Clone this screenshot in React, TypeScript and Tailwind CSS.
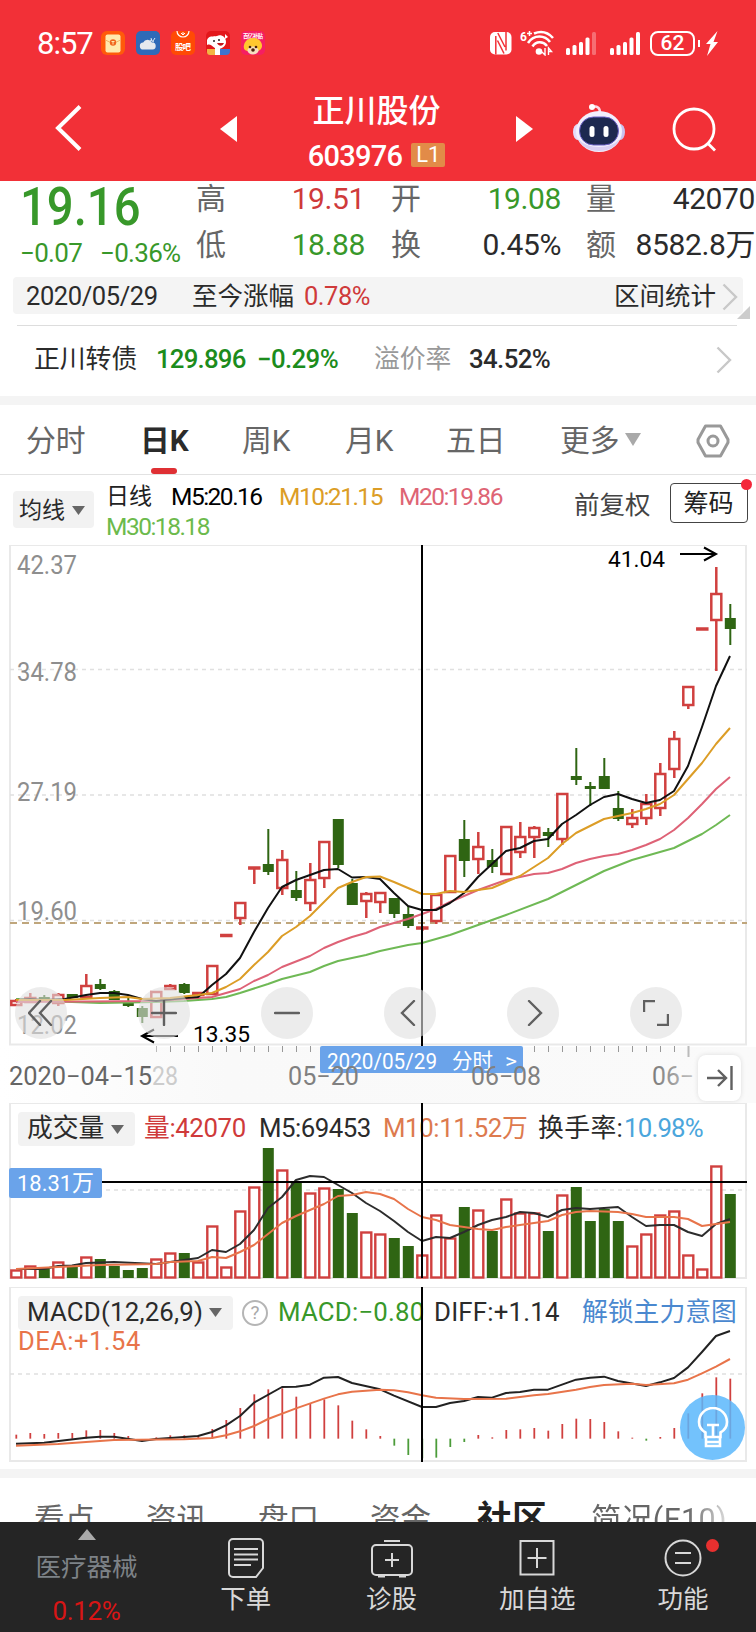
import type { ReactNode } from "react";
import { clsx } from "clsx";

const RED = "#d0403f";
const GREEN = "#2f6513";
const STEP = 14;
const FIRST_X = 16.3;

type Candle = [kind: "r" | "g", top: number, bottom: number, high: number, low: number];
type Point = [number, number];

const candles: Candle[] = [
  ["r", 1001, 1005, 999, 1005], ["r", 998, 1002, 993, 1003], ["g", 997, 1001, 995, 1002], ["r", 995, 1003, 993, 1006],
  ["g", 994, 998, 994, 998], ["r", 986, 997, 974, 999], ["g", 984, 989, 979, 990], ["g", 991, 1000, 990, 1000],
  ["g", 1001, 1006, 998, 1007], ["g", 1008, 1017, 1006, 1023], ["r", 992, 1017, 992, 1017], ["r", 986, 989, 984, 990],
  ["g", 984, 993, 983, 994], ["r", 993, 995, 993, 995], ["r", 966, 994, 966, 994], ["r", 935, 936, 935, 936],
  ["r", 903, 918, 903, 925], ["r", 867.5, 868.5, 868, 884], ["g", 864, 872, 829, 875], ["r", 860, 888, 850, 895],
  ["g", 890, 898, 871, 901], ["r", 880, 903, 863, 911], ["r", 842, 878, 842, 888], ["g", 819, 865, 819, 868],
  ["g", 883, 905, 879, 905], ["r", 894, 901, 892, 918], ["r", 893, 902, 893, 913], ["g", 898, 914, 898, 918],
  ["g", 914, 926, 906, 928], ["r", 927.5, 928.5, 926, 931], ["r", 895, 921, 895, 924], ["r", 856, 892, 856, 892],
  ["g", 839, 861, 820, 877], ["r", 847, 859, 832, 874], ["g", 860, 867, 849, 873], ["r", 827, 874, 827, 874],
  ["r", 837, 852, 822, 858], ["r", 828, 837, 826, 858], ["g", 832, 836, 828, 847], ["r", 794, 839, 794, 845],
  ["g", 776, 780, 748, 785], ["g", 786, 789, 782, 806], ["g", 776, 789, 758, 789], ["g", 808, 819, 791, 821],
  ["r", 818, 824, 809, 828], ["r", 804, 818, 794, 825], ["r", 774, 808, 763, 816], ["r", 739, 769, 731, 778],
  ["r", 687, 705, 687, 709], ["r", 628.5, 629.5, 629, 629], ["r", 594, 620, 567, 671], ["g", 618, 629, 604, 645],
];

const ma5: Point[] = [
  [16, 1000], [30, 999], [44, 1000], [65, 999], [86, 995], [100, 993], [114, 993], [128, 995], [142, 999], [156, 1001],
  [184, 998], [198, 997], [203, 993], [212, 985], [226, 974], [240, 958], [254, 932], [268, 908], [282, 887], [296, 880],
  [310, 875], [324, 870], [338, 869], [352, 877.5], [366, 877], [380, 879], [394, 893], [408, 906], [422, 910], [436, 910],
  [450, 903], [464, 893], [478, 877], [492, 864], [506, 851], [520, 848], [534, 841], [548, 839], [562, 824], [576, 815],
  [590, 805], [604, 797], [618, 794], [632, 799], [646, 803], [660, 800], [674, 791], [688, 766], [702, 727], [716, 686],
  [730, 656],
];
const ma10: Point[] = [
  [16, 1000], [65, 1000], [100, 998], [128, 997], [142, 999], [170, 998], [198, 995], [212, 993], [226, 987], [240, 979],
  [254, 965], [268, 952], [282, 936], [296, 927], [310, 916], [324, 902], [338, 888], [352, 882], [366, 877], [380, 876.5],
  [394, 882], [408, 888], [422, 894], [436, 894], [450, 891], [464, 892], [478, 890], [492, 888], [506, 882], [520, 876],
  [534, 867], [548, 858], [562, 844], [576, 833], [590, 826], [604, 819], [618, 816], [632, 813], [646, 809], [660, 804],
  [674, 795], [688, 779], [702, 763], [716, 744], [730, 728],
];
const ma20: Point[] = [
  [16, 1002], [156, 1001], [198, 998], [212, 997], [240, 989], [254, 981], [268, 975], [282, 967], [310, 956], [324, 948],
  [338, 942], [352, 937], [366, 933], [380, 927], [394, 923], [408, 919], [422, 914], [436, 909], [450, 902], [464, 896],
  [478, 890], [506, 880], [520, 877], [534, 874], [548, 873], [562, 869], [576, 863], [590, 859], [604, 856], [618, 854],
  [632, 850], [646, 845], [660, 839], [674, 830], [688, 818], [702, 804], [716, 789], [730, 777],
];
const ma30: Point[] = [
  [16, 999], [44, 1001], [100, 1003], [156, 1002], [184, 1001], [212, 999], [226, 997], [240, 993], [268, 984], [282, 979],
  [310, 972], [324, 966], [338, 961], [366, 955], [380, 951], [408, 945], [422, 943], [436, 939], [450, 935], [478, 925],
  [506, 915], [548, 899], [576, 885], [604, 871], [632, 860], [660, 852], [674, 848], [702, 834], [716, 825], [730, 815],
];

// top edge of every volume bar, base line is 1278
const volumes = [
  1270, 1266, 1269, 1262, 1267, 1257, 1259, 1266, 1270, 1268, 1259, 1253, 1253, 1262, 1226, 1267, 1211, 1187, 1148, 1170,
  1183, 1193, 1188, 1189, 1213, 1232, 1234, 1238, 1246, 1255, 1215, 1238, 1207, 1210, 1231, 1199, 1213, 1213, 1231, 1195,
  1187, 1221, 1209, 1221, 1246, 1234, 1215, 1211, 1255, 1269, 1166, 1194,
];
const vol5: Point[] = [
  [16, 1269], [44, 1269], [58, 1266], [72, 1265.5], [86, 1263], [114, 1262], [156, 1264], [184, 1260], [198, 1258],
  [212, 1250], [226, 1252], [240, 1244], [254, 1230], [268, 1208], [282, 1197], [296, 1180], [310, 1176], [324, 1177],
  [338, 1185], [352, 1193], [366, 1203], [380, 1211], [394, 1221], [408, 1232], [422, 1241], [436, 1237], [450, 1238],
  [464, 1232], [478, 1225], [492, 1220], [506, 1217], [520, 1212], [534, 1213], [548, 1217], [562, 1210], [576, 1208],
  [590, 1209], [618, 1207], [632, 1217], [646, 1226], [660, 1225], [674, 1225], [688, 1232], [702, 1236], [716, 1224],
  [730, 1219],
];
const vol10: Point[] = [
  [16, 1269], [58, 1267], [100, 1265], [156, 1264], [170, 1262], [198, 1261], [212, 1257], [226, 1258], [240, 1252],
  [254, 1245], [268, 1234], [282, 1223], [296, 1216], [324, 1204], [338, 1196], [352, 1195], [366, 1192], [380, 1194],
  [394, 1199], [408, 1209], [422, 1217], [436, 1220], [450, 1225], [478, 1229], [492, 1230], [506, 1227], [520, 1225],
  [548, 1221], [562, 1215], [576, 1212], [590, 1211], [618, 1212], [632, 1214], [646, 1217], [674, 1217], [688, 1219],
  [702, 1226], [716, 1224], [730, 1222],
];

// MACD values are in thirds of a pixel, zero axis at 476
const MACD_ZERO = 476;
const macdBars = [
  464, 459, 462, 459, 459, 451, 450, 459, 468, 476, 472, 466, 466, 466, 447, 420, 384, 343, 328, 325, 350, 370, 358, 376,
  422, 448, 468, 497, 525, 535, 533, 501, 486, 465, 472, 450, 448, 444, 452, 432, 416, 417, 426, 454, 473, 482, 471, 444,
  400, 340, 292, 296,
];
const diff: Point[] = [
  [16, 491], [44, 488], [86, 473], [100, 470], [114, 470], [142, 483], [156, 477], [198, 468], [212, 456], [226, 436],
  [240, 408], [254, 368], [282, 321], [296, 320], [310, 314], [324, 293], [338, 291], [352, 309], [380, 328], [394, 347],
  [422, 381], [436, 381], [450, 369], [464, 363], [478, 351], [492, 353], [506, 339], [520, 336], [534, 329], [548, 329],
  [576, 299], [590, 293], [604, 290], [618, 303], [646, 318], [660, 307], [674, 294], [688, 262], [702, 216], [716, 168],
  [730, 153],
];
const dea: Point[] = [
  [16, 497], [58, 492], [114, 480], [184, 478], [212, 474], [226, 466], [240, 454], [254, 438], [268, 417], [296, 385],
  [324, 356], [338, 343], [352, 335], [380, 329], [394, 331], [408, 337], [422, 346], [436, 353], [464, 357], [506, 356],
  [520, 351], [534, 346], [548, 342], [576, 329], [590, 321], [604, 315], [632, 311], [646, 315], [674, 310], [688, 299],
  [702, 280], [716, 260], [730, 237],
];

const macdY = (v: number) => 1280 + v / 3;
const xAt = (i: number) => FIRST_X + STEP * i;
const toMacd = (pts: Point[]) => pts.map(([x, y]): Point => [x, macdY(y)]);

function Line({ pts, color }: { pts: Point[]; color: string }) {
  return (
    <polyline
      points={pts.map((p) => p.join(",")).join(" ")}
      fill="none"
      stroke={color}
      strokeWidth="2"
      strokeLinejoin="round"
    />
  );
}

function Label({ x, y, w, size = 25, color = "#8e8e8e", children }: {
  x: number; y: number; w: number; size?: number; color?: string; children: string;
}) {
  return (
    <text x={x} y={y} fontSize={size} fill={color} textLength={w} lengthAdjust="spacingAndGlyphs">
      {children}
    </text>
  );
}

function Dash({ y, color = "#e0e0e0" }: { y: number; color?: string }) {
  return <line x1="10" x2="747" y1={y} y2={y} stroke={color} strokeWidth="1.3" strokeDasharray="4 4" />;
}

function Chevron({ className }: { className?: string }) {
  return (
    <svg className={clsx("w-[16px] h-[28px]", className)} viewBox="0 0 16 28" fill="none" stroke="#c8c8c8" strokeWidth="2.4">
      <path d="M1.5 1.5 14 14 1.5 26.5" />
    </svg>
  );
}

function Caret({ className }: { className?: string }) {
  return (
    <svg className={className} viewBox="0 0 14 10" preserveAspectRatio="none" fill="currentColor">
      <path d="M0 0H14L7 10Z" />
    </svg>
  );
}

function StatusBar() {
  return (
    <div className="flex h-[86px] items-center pl-[37px] text-white">
      <span className="w-[64px] text-[31px] leading-none tracking-[-1px]">8:57</span>
      <div className="flex gap-[11px]">
        <svg width="24" height="24" viewBox="0 0 24 24">
          <rect width="24" height="24" rx="6" fill="#ff5a0a" />
          <rect x="4.5" y="3.5" width="15" height="18" rx="2" fill="#ffe9ad" />
          <path d="M4.5 9Q12 14 19.5 9" fill="none" stroke="#f3b46a" />
          <circle cx="12" cy="11.5" r="3.2" fill="#f0651e" />
          <path d="M10.5 10.5h3M12 10.5v3" stroke="#ffe9ad" />
        </svg>
        <svg width="24" height="24" viewBox="0 0 24 24">
          <rect width="24" height="24" rx="5" fill="#2f6ab8" />
          <path d="M14 9l4 2M19 7l-2 3M15 7l1 3" stroke="#dfeaf6" />
          <path d="M7.5 18.5a3.5 3.5 0 0 1-.3-7 4.8 4.8 0 0 1 8.7 0 3.5 3.5 0 0 1 .6 7Z" fill="#e6e9ee" />
        </svg>
        <svg width="24" height="24" viewBox="0 0 24 24">
          <rect width="24" height="24" rx="5" fill="#ff4a05" />
          <path d="M6 0a6 6 0 0 0 12 0" fill="none" stroke="#fff" strokeWidth="1.2" />
          <path d="M10 2l2 2 2-2M12 4V1" stroke="#fff" fill="none" />
          <text x="4" y="19" fontSize="8.5" fontWeight="700" fill="#fff" textLength="16">股吧</text>
        </svg>
        <svg width="24" height="24" viewBox="0 0 24 24">
          <rect width="24" height="24" rx="5" fill="#e3171b" />
          <path d="M1 9C3 4 7 6 11 5c4-2 9 1 9 6 0 4-4 7-8 7-5 0-6-6-11-4Z" fill="#fff" />
          <path d="M19 3l3 3-3 2Z" fill="#fff" />
          <path d="M11 12h7c-1 3-5 4-7 0Z" fill="#c4151c" />
          <circle cx="13" cy="9" r="1" fill="#222" />
          <circle cx="8" cy="10" r="1" fill="#222" />
          <path d="M1 18h8v6H4a3 3 0 0 1-3-3Z" fill="#f3b443" />
          <rect x="9" y="17" width="5" height="7" fill="#fff" />
          <path d="M14 18h10v2a4 4 0 0 1-4 4h-6Z" fill="#3f74cf" />
        </svg>
        <svg width="24" height="24" viewBox="0 0 24 24">
          <rect width="24" height="24" rx="5" fill="#f51e62" />
          <text x="2" y="6.5" fontSize="5.5" fontWeight="700" fill="#fff" textLength="20">百亿补贴</text>
          <path d="M12 7c6 0 9 4 9 8 0 3-3 5-5 5H7c-3 0-5-2-4-6 1-4 4-7 9-7Z" fill="#ffc72e" />
          <ellipse cx="12" cy="19.5" rx="5.5" ry="4" fill="#f6dfc0" />
          <circle cx="9" cy="16" r="1.3" fill="#4a220c" />
          <circle cx="15" cy="16" r="1.3" fill="#4a220c" />
          <circle cx="12" cy="19" r="1.8" fill="#4a220c" />
        </svg>
      </div>

      <svg className="ml-[225px]" width="22" height="23" viewBox="0 0 22 23">
        <rect width="21.5" height="22.5" rx="5" fill="#fff" />
        <path d="M5.8 4v18.500M7.800 1 15 15M7.500 8.500l6.500 13M16 0v18.500" fill="none" stroke="#f23037" strokeWidth="1.5" />
      </svg>
      <svg className="ml-[8px]" width="34" height="26" viewBox="0 0 34 26" fill="none" stroke="#fff">
        <text x="0" y="11" fontSize="12" fontWeight="700" fill="#fff" stroke="none">6</text>
        <path d="M7 3.5h5M9.5 1v5" strokeWidth="1.5" />
        <path d="M14 3.5Q25-1 33 8" strokeWidth="2.6" />
        <path d="M8 13C14 4 25 5 30 12M12.5 16.5C16 11 23 11 27 16" strokeWidth="2.6" />
        <circle cx="19" cy="21.5" r="3.3" fill="#fff" stroke="none" />
        <path d="M25 18v7l-3-3M28.5 25v-7l3 3.5h-3" strokeWidth="1.4" />
      </svg>
      <svg className="ml-[12px]" width="30" height="23" viewBox="0 0 30 23" fill="#fff">
        <rect x="0" y="16" width="4" height="7" rx="1.5" />
        <rect x="6.5" y="13" width="4" height="10" rx="1.5" />
        <rect x="13" y="10" width="4" height="13" rx="1.5" />
        <rect x="19.5" y="5.5" width="4" height="17.5" rx="1.5" />
        <rect x="26" y="0" width="4" height="23" rx="1.5" opacity=".3" />
      </svg>
      <svg className="ml-[14px]" width="30" height="23" viewBox="0 0 30 23" fill="#fff">
        <rect x="0" y="16" width="4" height="7" rx="1.5" />
        <rect x="6.5" y="13" width="4" height="10" rx="1.5" />
        <rect x="13" y="10" width="4" height="13" rx="1.5" />
        <rect x="19.5" y="5.5" width="4" height="17.5" rx="1.5" />
        <rect x="26" y="0" width="4" height="23" rx="1.5" />
      </svg>
      <span className="ml-[10px] flex h-[25px] w-[45px] items-center justify-center rounded-[8px] border-2 border-white text-[21px] leading-none font-medium">
        62
      </span>
      <span className="ml-[3px] h-[7px] w-[2px] bg-white" />
      <svg className="ml-[6px]" width="12" height="25" viewBox="0 0 12 25" fill="#fff">
        <path d="M11.5 0 0 13h4.5L1 25 12 11H7.5Z" />
      </svg>
    </div>
  );
}

function TitleBar() {
  return (
    <div className="flex h-[95px] items-center text-white">
      <svg className="ml-[55px] mt-[-12px]" width="27" height="46" viewBox="0 0 27 46" fill="none" stroke="#fff" strokeWidth="4">
        <path d="M25 1.5 3 23 25 44.5" />
      </svg>
      <svg className="ml-[138px] mt-[-10px]" width="17" height="26" viewBox="0 0 17 26" fill="#fff">
        <path d="M17 0v26L0 13Z" />
      </svg>
      <div className="flex w-[279px] flex-col items-center">
        <span className="text-[32px] leading-[36px] font-medium">正川股份</span>
        <div className="mt-[6px] flex h-[40px] items-center gap-[9px]">
          <span className="mt-[3px] text-[29px] leading-none font-medium tracking-[-0.7px]">603976</span>
          <span className="flex h-[24px] w-[34px] items-center justify-center rounded-[2px] bg-[#e28b48] text-[22px] leading-none">L1</span>
        </div>
      </div>
      <svg className="mt-[-10px]" width="17" height="26" viewBox="0 0 17 26" fill="#fff">
        <path d="M0 0v26l17-13Z" />
      </svg>
      <svg className="ml-[40px] mt-[-12px]" width="52" height="50" viewBox="0 0 52 50">
        <path d="M19 4q8-2 8 6" fill="none" stroke="#fbd9e6" strokeWidth="2.5" />
        <circle cx="19" cy="4" r="3" fill="#fff" />
        <ellipse cx="5" cy="29" rx="5" ry="8" fill="#e4dcfa" />
        <ellipse cx="47" cy="29" rx="5" ry="8" fill="#c9c0ee" />
        <ellipse cx="26" cy="28.5" rx="23" ry="20.5" fill="#f2effd" />
        <path d="M5 36q6 12 21 12t21-12q-8 8-21 8T5 36Z" fill="#d9cff3" />
        <rect x="6.5" y="14" width="39" height="28" rx="14" fill="#1d2950" stroke="#6d63c8" />
        <rect x="16.5" y="23" width="5" height="11" rx="2.5" fill="#fff" />
        <rect x="30.5" y="23" width="5" height="11" rx="2.5" fill="#fff" />
      </svg>
      <svg className="ml-[47px] mt-[-8px]" width="46" height="46" viewBox="0 0 46 46" fill="none" stroke="#fff" strokeWidth="2.8">
        <circle cx="22" cy="22" r="20" />
        <path d="M35.5 36 43 43.5" />
      </svg>
    </div>
  );
}

function Quote() {
  const cell = "text-[30px] leading-none tracking-[-0.4px] text-right";
  const name = "text-[30px] leading-none text-[#666]";
  return (
    <div className="flex h-[91px] bg-white">
      <div className="w-[196px] shrink-0 pl-[20px] text-[#38982a]">
        <div className="h-[50px] pt-[1px]">
          <span className="inline-block origin-left scale-x-[0.875] text-[54px] leading-[50px] font-medium">19.16</span>
        </div>
        <div className="flex h-[43px] items-center text-[26px] leading-none tracking-[-0.7px] whitespace-nowrap">
          <span className="w-[80px]">−0.07</span>
          <span>−0.36%</span>
        </div>
      </div>
      <div className="grid h-[86px] flex-1 grid-cols-[31px_138px_26px_30px_140px_25px_30px_139px] grid-rows-[35px_57px] items-center whitespace-nowrap">
        <span className={name}>高</span>
        <span className={clsx(cell, "text-[#cf3a3a]")}>19.51</span>
        <span />
        <span className={name}>开</span>
        <span className={clsx(cell, "text-[#38982a]")}>19.08</span>
        <span />
        <span className={name}>量</span>
        <span className={clsx(cell, "text-[#2b2b2b]")}>42070</span>
        <span className={name}>低</span>
        <span className={clsx(cell, "text-[#38982a]")}>18.88</span>
        <span />
        <span className={name}>换</span>
        <span className={clsx(cell, "text-[#2b2b2b]")}>0.45%</span>
        <span />
        <span className={name}>额</span>
        <span className={clsx(cell, "text-[#2b2b2b]")}>8582.8万</span>
      </div>
    </div>
  );
}

function IntervalBar() {
  return (
    <div className="relative h-[54px] bg-white pt-[5px] pl-[13px]">
      <div className="flex h-[37px] w-[730px] items-center rounded-[4px] bg-[#f4f4f4] pt-[2px] pl-[13px] text-[25.5px] leading-none whitespace-nowrap text-[#2b2b2b]">
        <span className="w-[166px] tracking-[-0.4px]">2020/05/29</span>
        <span className="w-[112px]">至今涨幅</span>
        <span className="tracking-[-0.5px] text-[#cf3a3a]">0.78%</span>
        <span className="mt-[1px] mr-[6px] ml-auto">区间统计</span>
        <Chevron className="mr-[5px]" />
      </div>
      <svg className="absolute top-[34px] left-[737px]" width="13" height="13" fill="#ccc">
        <path d="M13 0v13H0Z" />
      </svg>
      <div className="mt-[11px] ml-[4px] h-px w-[720px] bg-[#ddd]" />
    </div>
  );
}

function BondRow() {
  return (
    <div className="flex h-[70px] items-center bg-white pb-[2px] pl-[34px] text-[25.8px] leading-none whitespace-nowrap">
      <span className="w-[122px] text-[#2b2b2b]">正川转债</span>
      <span className="w-[101px] font-medium tracking-[-0.8px] text-[#1c8c1c]">129.896</span>
      <span className="w-[117px] font-medium tracking-[-0.6px] text-[#1c8c1c]">−0.29%</span>
      <span className="w-[95px] text-[#999]">溢价率</span>
      <span className="font-medium tracking-[-0.6px] text-[#2b2b2b]">34.52%</span>
      <Chevron className="mr-[24px] ml-auto" />
    </div>
  );
}

function PeriodTabs() {
  return (
    <div className="relative flex h-[70px] items-center border-b border-[#e2e2e2] bg-white pt-[2px] pl-[26px] text-[29.8px] leading-none whitespace-nowrap text-[#666]">
      <span className="w-[114px]">分时</span>
      <span className="w-[102px] font-bold text-[#2b2b2b]">日K</span>
      <span className="w-[103px]">周K</span>
      <span className="w-[101px]">月K</span>
      <span className="w-[114px]">五日</span>
      <span className="w-[65px]">更多</span>
      <Caret className="mt-[-2px] h-[13px] w-[16px] text-[#a9a9a9]" />
      <svg className="ml-[55px]" width="34" height="34" viewBox="0 0 34 34" fill="none" stroke="#999" strokeWidth="3">
        <path d="M9.5 2h15L32 15.5v3L24.5 32h-15L2 18.5v-3Z" strokeLinejoin="round" />
        <circle cx="17" cy="17" r="5" />
      </svg>
      <span className="absolute bottom-0 left-[151px] h-[6px] w-[26px] rounded-full bg-[#df3034]" />
    </div>
  );
}

function AverageRow() {
  return (
    <div className="flex h-[70px] bg-white pl-[13px] whitespace-nowrap">
      <div className="mt-[16px] flex h-[37px] w-[81px] items-center rounded-[4px] bg-[#f2f2f2] pt-[1px] pl-[6px] text-[23px] leading-none text-[#2b2b2b]">
        均线
        <Caret className="ml-[7px] h-[9px] w-[13px] text-[#666]" />
      </div>
      <div className="ml-[12px] w-[468px] pt-[7px] text-[24.5px] leading-[30px] tracking-[-1.5px]">
        <div className="flex">
          <span className="w-[65px] text-[23px] tracking-normal text-[#222]">日线</span>
          <span className="w-[108px] text-black">M5:20.16</span>
          <span className="w-[120px] text-[#dc9d26]">M10:21.15</span>
          <span className="text-[#de6474]">M20:19.86</span>
        </div>
        <div className="text-[#6cba4c]">M30:18.18</div>
      </div>
      <span className="mt-[14px] text-[25.5px] leading-[32px] text-[#444]">前复权</span>
      <div className="relative mt-[8px] ml-[19px] flex h-[40px] w-[78px] items-center justify-center rounded-[4px] border border-[#444] text-[25px] leading-none text-[#222]">
        筹码
        <span className="absolute -top-[5px] -right-[5px] size-[11px] rounded-full bg-[#f4273a]" />
      </div>
    </div>
  );
}

function RoundButton({ children }: { children: ReactNode }) {
  return (
    <button className="flex size-[52px] items-center justify-center rounded-full bg-[#e0e0e0]/60">
      <svg width="26" height="26" viewBox="0 0 26 26" fill="none" stroke="#606060" strokeWidth="2.4" strokeLinecap="round">
        {children}
      </svg>
    </button>
  );
}

function KChart() {
  return (
    <div className="relative h-[558px] bg-white">
      <svg className="block" width="756" height="558" viewBox="0 545 756 558">
        <defs>
          <linearGradient id="strip" x1="0" x2="1" y1="0" y2="0">
            <stop offset="0" stopColor="#fff" />
            <stop offset=".3" stopColor="#f9f9f9" />
            <stop offset="1" stopColor="#fafafa" />
          </linearGradient>
          <linearGradient id="fade" gradientUnits="userSpaceOnUse" x1="650" x2="700" y1="0" y2="0">
            <stop offset="0" stopColor="#777" />
            <stop offset="1" stopColor="#ccc" />
          </linearGradient>
        </defs>
        <rect x="0" y="1047" width="756" height="56" fill="url(#strip)" />
        <rect x="10" y="545" width="736" height="499.5" fill="#fff" stroke="#e9e9e9" strokeWidth="2" />
        <Dash y={669.5} />
        <Dash y={795} />
        <Dash y={920.5} />
        <line x1="10" x2="747" y1="923" y2="923" stroke="#bfa67c" strokeWidth="2" strokeDasharray="7 5" />

        <Label x={17} y={574} w={60}>42.37</Label>
        <Label x={17} y={681} w={60}>34.78</Label>
        <Label x={17} y={801} w={60}>27.19</Label>
        <Label x={17} y={920} w={60}>19.60</Label>
        <Label x={17} y={1034} w={60}>12.02</Label>

        {candles.map(([kind, top, bottom, high, low], i) => {
          const x = xAt(i);
          if (kind === "g") {
            return (
              <g key={i} fill={GREEN} stroke={GREEN} strokeWidth="2">
                <line x1={x} x2={x} y1={high} y2={low} />
                <rect x={x - 5.5} y={top} width="11" height={bottom - top} stroke="none" />
              </g>
            );
          }
          return (
            <g key={i} fill="#fff" stroke={RED} strokeWidth="2.5">
              <path d={`M${x} ${high}V${top}M${x} ${bottom}V${low}`} />
              <rect x={x - 5} y={top} width="10" height={bottom - top} />
            </g>
          );
        })}

        <Line pts={ma30} color="#6fb955" />
        <Line pts={ma20} color="#de6276" />
        <Line pts={ma5} color="#111" />
        <Line pts={ma10} color="#dc9d26" />

        <Label x={608} y={567} w={57} size={22} color="#000">41.04</Label>
        <path d="M680 554h36M704 547.500l12 6.500-12 6.500" fill="none" stroke="#000" strokeWidth="2" />
        <Label x={193} y={1042} w={57} size={22} color="#000">13.35</Label>
        <path d="M178 1036h-36M154 1029.500l-12 6.500 12 6.500" fill="none" stroke="#000" strokeWidth="2" />

        {Array.from({ length: 39 }, (_, i) => {
          const x = 156.5 + STEP * i;
          const long = x > 680 && x < 694;
          return (
            <line
              key={i}
              x1={x}
              x2={x}
              y1="1046"
              y2={long ? 1057 : 1052}
              stroke={i === 0 || long ? "#bbb" : "#999"}
              strokeWidth={long ? 2 : 1}
            />
          );
        })}

        <line x1="422" x2="422" y1="545" y2="1046" stroke="#000" strokeWidth="2" />
        <rect x="320" y="1046" width="203" height="27" rx="2" fill="#6aa3ea" />
        <Label x={327} y={1069} w={110} size={22.5} color="#fff">2020/05/29</Label>
        <Label x={452} y={1068} w={41} size={21} color="#fff">分时</Label>
        <Label x={505} y={1068} w={12} size={21} color="#fff">&gt;</Label>

        <Label x={152} y={1085} w={26} color="#ccc">28</Label>
        <Label x={9} y={1085} w={143} color="#666">2020−04−15</Label>
        <Label x={288} y={1085} w={71} color="#808080">05−20</Label>
        <Label x={471} y={1085} w={70} color="#808080">06−08</Label>
        <Label x={652} y={1085} w={42} color="url(#fade)">06−</Label>
      </svg>

      <div className="absolute top-[442px] left-[15px] flex gap-[71px]">
        <RoundButton>
          <path d="M12 1 1 13l11 12M23 1 12 13l11 12" />
        </RoundButton>
        <RoundButton>
          <path d="M13 1v24M1 13h24" />
        </RoundButton>
        <RoundButton>
          <path d="M1 13h24" />
        </RoundButton>
        <RoundButton>
          <path d="M17 1 5 13l12 12" />
        </RoundButton>
        <RoundButton>
          <path d="M9 1l12 12L9 25" />
        </RoundButton>
        <RoundButton>
          <path d="M1 12V1h11M25 14v11H14" strokeLinecap="butt" />
        </RoundButton>
      </div>
      <button className="absolute top-[510px] left-[698px] flex h-[46px] w-[43px] items-center justify-center rounded-[8px] bg-white shadow-[0_0_5px_rgba(0,0,0,0.12)]">
        <svg width="26" height="24" viewBox="0 0 26 24" fill="none" stroke="#606060" strokeWidth="2.4">
          <path d="M0 12h18M11 4l8 8-8 8M24.500 0v24" />
        </svg>
      </button>
    </div>
  );
}

function VolumeChart() {
  return (
    <div className="relative h-[184px] bg-white">
      <svg className="block" width="756" height="184" viewBox="0 1103 756 184">
        <rect x="10" y="1103" width="736" height="175" fill="none" stroke="#e9e9e9" strokeWidth="2" />
        <Dash y={1190} />
        {volumes.map((top, i) => {
          const x = xAt(i);
          return candles[i][0] === "g" ? (
            <rect key={i} x={x - 5.5} y={top} width="11" height={1278 - top} fill={GREEN} />
          ) : (
            <rect key={i} x={x - 5} y={top + 0.5} width="10" height={1277 - top} fill="#fff" stroke={RED} strokeWidth="2.4" />
          );
        })}
        <Line pts={vol5} color="#2c2c2c" />
        <Line pts={vol10} color="#e8744a" />
        <line x1="100" x2="747" y1="1182" y2="1182" stroke="#000" strokeWidth="2" />
        <rect x="9" y="1168" width="93" height="30" rx="2" fill="#6aa3ea" />
        <Label x={17} y={1191} w={77} size={22.5} color="#fff">18.31万</Label>
      </svg>
      <div className="absolute top-[9px] left-[18px] flex h-[34px] items-center text-[25.8px] leading-none tracking-[-0.4px] whitespace-nowrap">
        <span className="mr-[9px] flex h-[34px] w-[117px] items-center rounded-[4px] bg-[#f2f2f2] pl-[9px] tracking-normal text-[#2b2b2b]">
          成交量
          <Caret className="ml-[7px] h-[9px] w-[13px] text-[#666]" />
        </span>
        <span className="w-[115px] text-[#cf3a3a]">量:42070</span>
        <span className="w-[124px] tracking-[-0.5px] text-[#2b2b2b]">M5:69453</span>
        <span className="w-[155px] text-[#dd7a4e]">M10:11.52万</span>
        <span className="w-[86px] tracking-[0.4px] text-[#2b2b2b]">换手率:</span>
        <span className="tracking-[-0.8px] text-[#4ba6dc]">10.98%</span>
      </div>
      <div className="absolute top-0 left-[421px] h-[175px] w-[2px] bg-black" />
    </div>
  );
}

function MacdChart() {
  return (
    <div className="relative h-[182px] bg-white">
      <svg className="block" width="756" height="182" viewBox="0 1287 756 182">
        <rect x="10" y="1287" width="736" height="174" fill="none" stroke="#e9e9e9" strokeWidth="2" />
        <Dash y={1374} />
        {macdBars.map((v, i) => (
          <line
            key={i}
            x1={xAt(i)}
            x2={xAt(i)}
            y1={macdY(MACD_ZERO)}
            y2={macdY(v)}
            stroke={v > MACD_ZERO ? "#4c9c3a" : RED}
            strokeWidth="1.8"
          />
        ))}
        <Line pts={toMacd(diff)} color="#222" />
        <Line pts={toMacd(dea)} color="#e8744a" />
      </svg>
      <div className="absolute top-[8px] left-[18px] flex h-[34px] items-center pt-[1px] text-[25.8px] leading-none tracking-[0.2px] whitespace-nowrap">
        <span className="mr-[9px] flex h-[34px] w-[215px] items-center rounded-[4px] bg-[#f2f2f2] pl-[9px] text-[#2b2b2b]">
          MACD(12,26,9)
          <Caret className="ml-[6px] h-[9px] w-[13px] text-[#666]" />
        </span>
        <span className="mr-[10px] flex size-[26px] items-center justify-center rounded-full border-2 border-[#b5b5b5] text-[19px] text-[#aaa]">?</span>
        <span className="w-[156px] text-[#38982a]">MACD:−0.80</span>
        <span className="w-[148px] text-[#2b2b2b]">DIFF:+1.14</span>
        <span className="tracking-[0px] text-[#4a88cf]">解锁主力意图</span>
      </div>
      <span className="absolute top-[41px] left-[18px] text-[25.5px] leading-[26px] tracking-[0.5px] text-[#e8744a]">DEA:+1.54</span>
      <div className="absolute top-0 left-[421px] h-[175px] w-[2px] bg-black" />
      <button className="absolute top-[108px] left-[680px] flex size-[65px] items-center justify-center rounded-full bg-[#5ab7fb]/85">
        <svg width="32" height="42" viewBox="0 0 32 42" fill="none" stroke="#fff" strokeWidth="2.6">
          <path d="M8.5 30v-4.5C4 23 2 19 2 15a14 14 0 0 1 28 0c0 4-2 8-6.5 10.5V30ZM9 30v9h14v-9M9 35h14M10 18h12M16 18v11" />
        </svg>
      </button>
    </div>
  );
}

function ContentTabs() {
  return (
    <div className="flex h-[44px] items-start overflow-hidden bg-white pt-[25px] pl-[34px] text-[30.5px] leading-[34px] whitespace-nowrap text-[#666]">
      <span className="w-[112px]">看点</span>
      <span className="w-[112px]">资讯</span>
      <span className="w-[112px]">盘口</span>
      <span className="w-[107px]">资金</span>
      <span className="w-[114px] text-[35px] font-bold text-[#222]">社区</span>
      <span className="bg-linear-to-r from-[#666] from-70% to-[#ddd] bg-clip-text tracking-[0.4px] text-transparent">简况(F10)</span>
    </div>
  );
}

function NavItem({ label, children }: { label: string; children: ReactNode }) {
  return (
    <div className="flex flex-1 flex-col items-center pt-[14px] text-[25.5px] leading-[30px] text-[#d8d8d8]">
      {children}
      <span className="mt-[4px]">{label}</span>
    </div>
  );
}

function BottomNav() {
  return (
    <nav className="flex h-[110px] bg-[#252525]">
      <div className="flex w-[173px] flex-col items-center">
        <svg className="mt-[7px]" width="18" height="11" fill="#aaa">
          <path d="M9 0l9 11H0Z" />
        </svg>
        <span className="mt-[12px] text-[25.5px] leading-[30px] text-[#7d8287]">医疗器械</span>
        <span className="mt-[16px] text-[26px] leading-[26px] tracking-[-0.3px] text-[#d81515]">0.12%</span>
      </div>
      <NavItem label="下单">
        <svg width="40" height="44" viewBox="0 0 40 44" fill="none" stroke="#d8d8d8" strokeWidth="2">
          <path d="M7 3h26a4 4 0 0 1 4 4v25l-7 9H7a4 4 0 0 1-4-4V7a4 4 0 0 1 4-4Z" />
          <path d="M8 13h24M8 18.500h24M8 23.500h24M8 29h17" />
        </svg>
      </NavItem>
      <NavItem label="诊股">
        <svg width="44" height="44" viewBox="0 0 44 44" fill="none" stroke="#d8d8d8" strokeWidth="2">
          <rect x="2" y="9" width="40" height="30" rx="4" />
          <path d="M14 5h16M8 40.500h7M29 40.500h7M22 17v14M15 24h14" />
        </svg>
      </NavItem>
      <NavItem label="加自选">
        <svg width="40" height="44" viewBox="0 0 40 44" fill="none" stroke="#d8d8d8" strokeWidth="2">
          <rect x="3.500" y="5" width="33" height="33.500" />
          <path d="M20 12v20M10.500 22h19" />
        </svg>
      </NavItem>
      <NavItem label="功能">
        <div className="relative">
          <svg width="44" height="44" viewBox="0 0 44 44" fill="none" stroke="#d8d8d8" strokeWidth="2">
            <circle cx="22" cy="22" r="17.500" />
            <path d="M14 17h16M14 27h16" />
          </svg>
          <span className="absolute top-[3px] left-[45px] size-[13px] rounded-full bg-[#e8302f]" />
        </div>
      </NavItem>
    </nav>
  );
}

export default function App() {
  return (
    <div className="h-[1632px] w-[756px] overflow-hidden bg-white font-['Roboto','Noto_Sans_CJK_SC',sans-serif]">
      <header className="h-[181px] bg-[#f23037]">
        <StatusBar />
        <TitleBar />
      </header>
      <Quote />
      <IntervalBar />
      <BondRow />
      <div className="h-[9px] bg-[#f4f4f4]" />
      <PeriodTabs />
      <AverageRow />
      <KChart />
      <VolumeChart />
      <MacdChart />
      <div className="h-[9px] bg-[#f4f4f4]" />
      <ContentTabs />
      <BottomNav />
    </div>
  );
}
